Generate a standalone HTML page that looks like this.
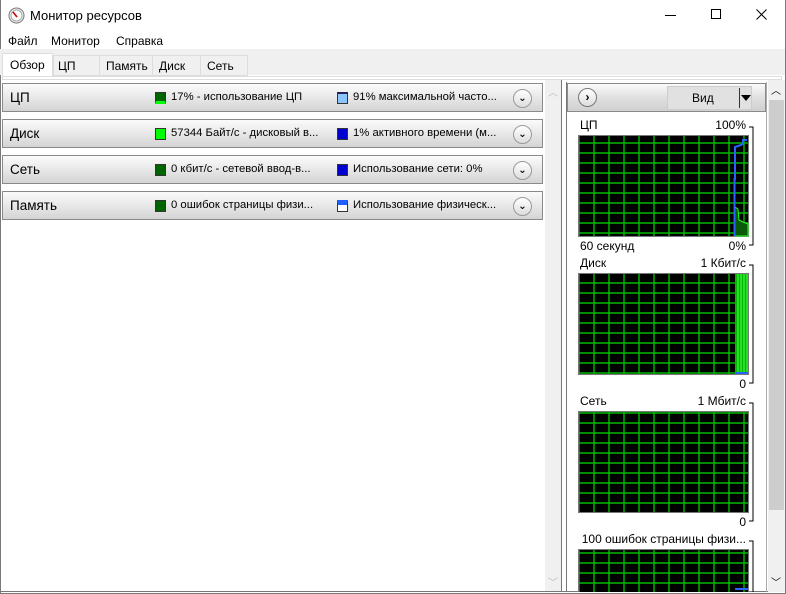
<!DOCTYPE html>
<html><head><meta charset="utf-8"><style>
*{margin:0;padding:0;box-sizing:border-box}
body{width:786px;height:594px;overflow:hidden;background:#fff;font-family:"Liberation Sans","DejaVu Sans",sans-serif;font-size:12px;color:#000;position:relative}
.abs{position:absolute}
.bar{position:absolute;left:2px;width:541px;height:29px;border:1px solid #8a8a8a;background:linear-gradient(#fbfbfb,#e8e8e8 50%,#d4d4d4)}
.bar .t{position:absolute;left:7px;top:6px;font-size:13.5px}
.bar .sq{position:absolute;top:8px;width:11px;height:12px;border:1px solid #333}
.bar .l{position:absolute;top:7px;font-size:11.3px;white-space:nowrap}
.bar .c{position:absolute;left:510px;top:5px;width:19px;height:19px;border-radius:50%;border:1px solid #999;background:linear-gradient(#fff,#ddd);font-size:10px;text-align:center;line-height:17px;font-weight:bold}
.lab{position:absolute;font-size:12px;white-space:nowrap}
</style></head><body>
<div class="abs" style="left:0;top:0;width:786px;height:594px;border:1px solid #7a7a7a;border-top:none"></div>
<svg class="abs" style="left:8px;top:7px" width="17" height="17"><circle cx="8.5" cy="8.5" r="7.5" fill="#eee" stroke="#777"/><circle cx="8.5" cy="8.5" r="5.5" fill="#fff" stroke="#aaa"/><line x1="5" y1="5" x2="9" y2="10" stroke="#c00" stroke-width="1.6"/></svg>
<div class="lab" style="left:30px;top:8px;font-size:13px">Монитор ресурсов</div>
<div class="abs" style="left:665px;top:15px;width:11px;height:1px;background:#000"></div>
<div class="abs" style="left:711px;top:9px;width:10px;height:10px;border:1px solid #000"></div>
<svg class="abs" style="left:756px;top:9px" width="11" height="11"><path d="M0.5 0.5L10.5 10.5M10.5 0.5L0.5 10.5" stroke="#000"/></svg>
<div class="lab" style="left:8px;top:34px">Файл</div>
<div class="lab" style="left:51px;top:34px">Монитор</div>
<div class="lab" style="left:116px;top:34px">Справка</div>
<div class="abs" style="left:0;top:49px;width:785px;height:26px;background:#f0f0f0"></div>
<div class="abs" style="left:2px;top:76px;width:780px;height:4px;border:1px solid #ddd;background:#fff"></div>
<div class="abs" style="left:2px;top:53px;width:51px;height:23px;background:#fff;border:1px solid #ddd;border-bottom:none"></div>
<div class="abs" style="left:53px;top:55px;width:195px;height:21px;border:1px solid #ddd;background:#f0f0f0"></div>
<div class="abs" style="left:99px;top:55px;width:1px;height:21px;background:#ddd"></div>
<div class="abs" style="left:152px;top:55px;width:1px;height:21px;background:#ddd"></div>
<div class="abs" style="left:200px;top:55px;width:1px;height:21px;background:#ddd"></div>
<div class="lab" style="left:10px;top:58px">Обзор</div>
<div class="lab" style="left:58px;top:59px">ЦП</div>
<div class="lab" style="left:106px;top:59px">Память</div>
<div class="lab" style="left:159px;top:59px">Диск</div>
<div class="lab" style="left:207px;top:59px">Сеть</div>

<div class="bar" style="top:83px"><div class="t">ЦП</div><div class="sq" style="left:152px;background:#006400;border-bottom:3px solid #0f0"></div><div class="l" style="left:168px">17% - использование ЦП</div><div class="sq" style="left:334px;background:#8cc4ff;border-top:2px solid #225"></div><div class="l" style="left:350px">91% максимальной часто...</div><div class="c">⌄</div></div>
<div class="bar" style="top:119px"><div class="t">Диск</div><div class="sq" style="left:152px;background:#0f0"></div><div class="l" style="left:168px">57344 Байт/с - дисковый в...</div><div class="sq" style="left:334px;background:#0000d0"></div><div class="l" style="left:350px">1% активного времени (м...</div><div class="c">⌄</div></div>
<div class="bar" style="top:155px"><div class="t">Сеть</div><div class="sq" style="left:152px;background:#006400"></div><div class="l" style="left:168px">0 кбит/с - сетевой ввод-в...</div><div class="sq" style="left:334px;background:#0000d0"></div><div class="l" style="left:350px">Использование сети: 0%</div><div class="c">⌄</div></div>
<div class="bar" style="top:191px"><div class="t">Память</div><div class="sq" style="left:152px;background:#006400"></div><div class="l" style="left:168px">0 ошибок страницы физи...</div><div class="sq" style="left:334px;background:#fff;border-top:5px solid #2060ff"></div><div class="l" style="left:350px">Использование физическ...</div><div class="c">⌄</div></div>

<div class="abs" style="left:545px;top:80px;width:16px;height:512px;background:#f0f0f0"></div>
<div class="lab" style="left:548px;top:84px;color:#bbb;font-size:10px">︿</div>
<div class="lab" style="left:548px;top:574px;color:#bbb;font-size:10px">﹀</div>
<div class="abs" style="left:561px;top:80px;width:1px;height:512px;background:#777"></div>
<div class="abs" style="left:566px;top:82px;width:1px;height:510px;background:#777"></div>
<div class="abs" style="left:0;top:591px;width:786px;height:1px;background:#777"></div>
<div class="abs" style="left:567px;top:83px;width:199px;height:29px;border:1px solid #8a8a8a;background:linear-gradient(#fbfbfb,#e0e0e0 50%,#d0d0d0)"></div>
<div class="abs" style="left:578px;top:88px;width:19px;height:19px;border-radius:50%;border:1px solid #777;background:linear-gradient(#fff,#ddd);text-align:center;font-size:12px;line-height:17px;font-weight:bold">›</div>
<div class="abs" style="left:667px;top:86px;width:85px;height:24px;background:#e1e1e1;border:1px solid #ccc"></div>
<div class="lab" style="left:692px;top:91px">Вид</div>
<div class="abs" style="left:739px;top:88px;width:1px;height:20px;background:#333"></div>
<div class="abs" style="left:741px;top:95px;width:0;height:0;border-left:5px solid transparent;border-right:5px solid transparent;border-top:6px solid #000"></div>
<div class="abs" style="left:766px;top:82px;width:1px;height:510px;background:#aaa"></div>
<div class="abs" style="left:768px;top:80px;width:17px;height:512px;background:#f0f0f0"></div>
<div class="abs" style="left:769px;top:100px;width:15px;height:410px;background:#cdcdcd"></div>
<div class="lab" style="left:771px;top:82px;font-size:10px">︿</div>
<div class="lab" style="left:771px;top:574px;font-size:10px">﹀</div>

<svg class="abs" style="left:567px;top:112px" width="199" height="480">
<defs><pattern id="g" x="11" y="0" width="15" height="10" patternUnits="userSpaceOnUse"><rect width="15" height="10" fill="#000"/><path d="M1 0V10M0 1H15" stroke="#0b0" stroke-width="1.4"/></pattern></defs>
<g font-family="Liberation Sans,sans-serif" font-size="12">
<text x="13" y="17">ЦП</text><text x="179" y="17" text-anchor="end">100%</text>
<rect x="11.5" y="23.5" width="170" height="101" fill="url(#g)" stroke="#777"/>
<path d="M168 124V95L171 97 172 108 176 110 181 112V124Z" fill="#0a5a0a" stroke="#2f2" />
<path d="M167.5 124V67L168 67V35L171 34L174 33L176 32V28H180" fill="none" stroke="#2a62ff" stroke-width="2"/>
<text x="13" y="138">60 секунд</text><text x="179" y="138" text-anchor="end">0%</text>
<path d="M182 15H186V133H182" fill="none" stroke="#000"/>
<text x="13" y="155">Диск</text><text x="179" y="155" text-anchor="end">1 Кбит/с</text>
<rect x="11.5" y="161.5" width="170" height="101" fill="url(#g)" stroke="#777"/>
<rect x="168" y="162" width="13" height="100" fill="#0b0"/>
<path d="M171 162V262M174 162V262M177 162V262M180 162V262" stroke="#5f5"/>
<rect x="169" y="260" width="12" height="2" fill="#2a62ff"/>
<text x="179" y="276" text-anchor="end">0</text>
<path d="M182 153H186V271H182" fill="none" stroke="#000"/>
<text x="13" y="293">Сеть</text><text x="179" y="293" text-anchor="end">1 Мбит/с</text>
<rect x="11.5" y="299.5" width="170" height="101" fill="url(#g)" stroke="#777"/>
<text x="179" y="414" text-anchor="end">0</text>
<path d="M182 291H186V409H182" fill="none" stroke="#000"/>
<text x="179" y="431" text-anchor="end">100 ошибок страницы физи...</text>
<rect x="11.5" y="437.5" width="170" height="60" fill="url(#g)" stroke="#777"/>
<rect x="168" y="476" width="13" height="2" fill="#2a62ff"/>
<path d="M182 429H186V480" fill="none" stroke="#000"/>
</g></svg>
</body></html>
